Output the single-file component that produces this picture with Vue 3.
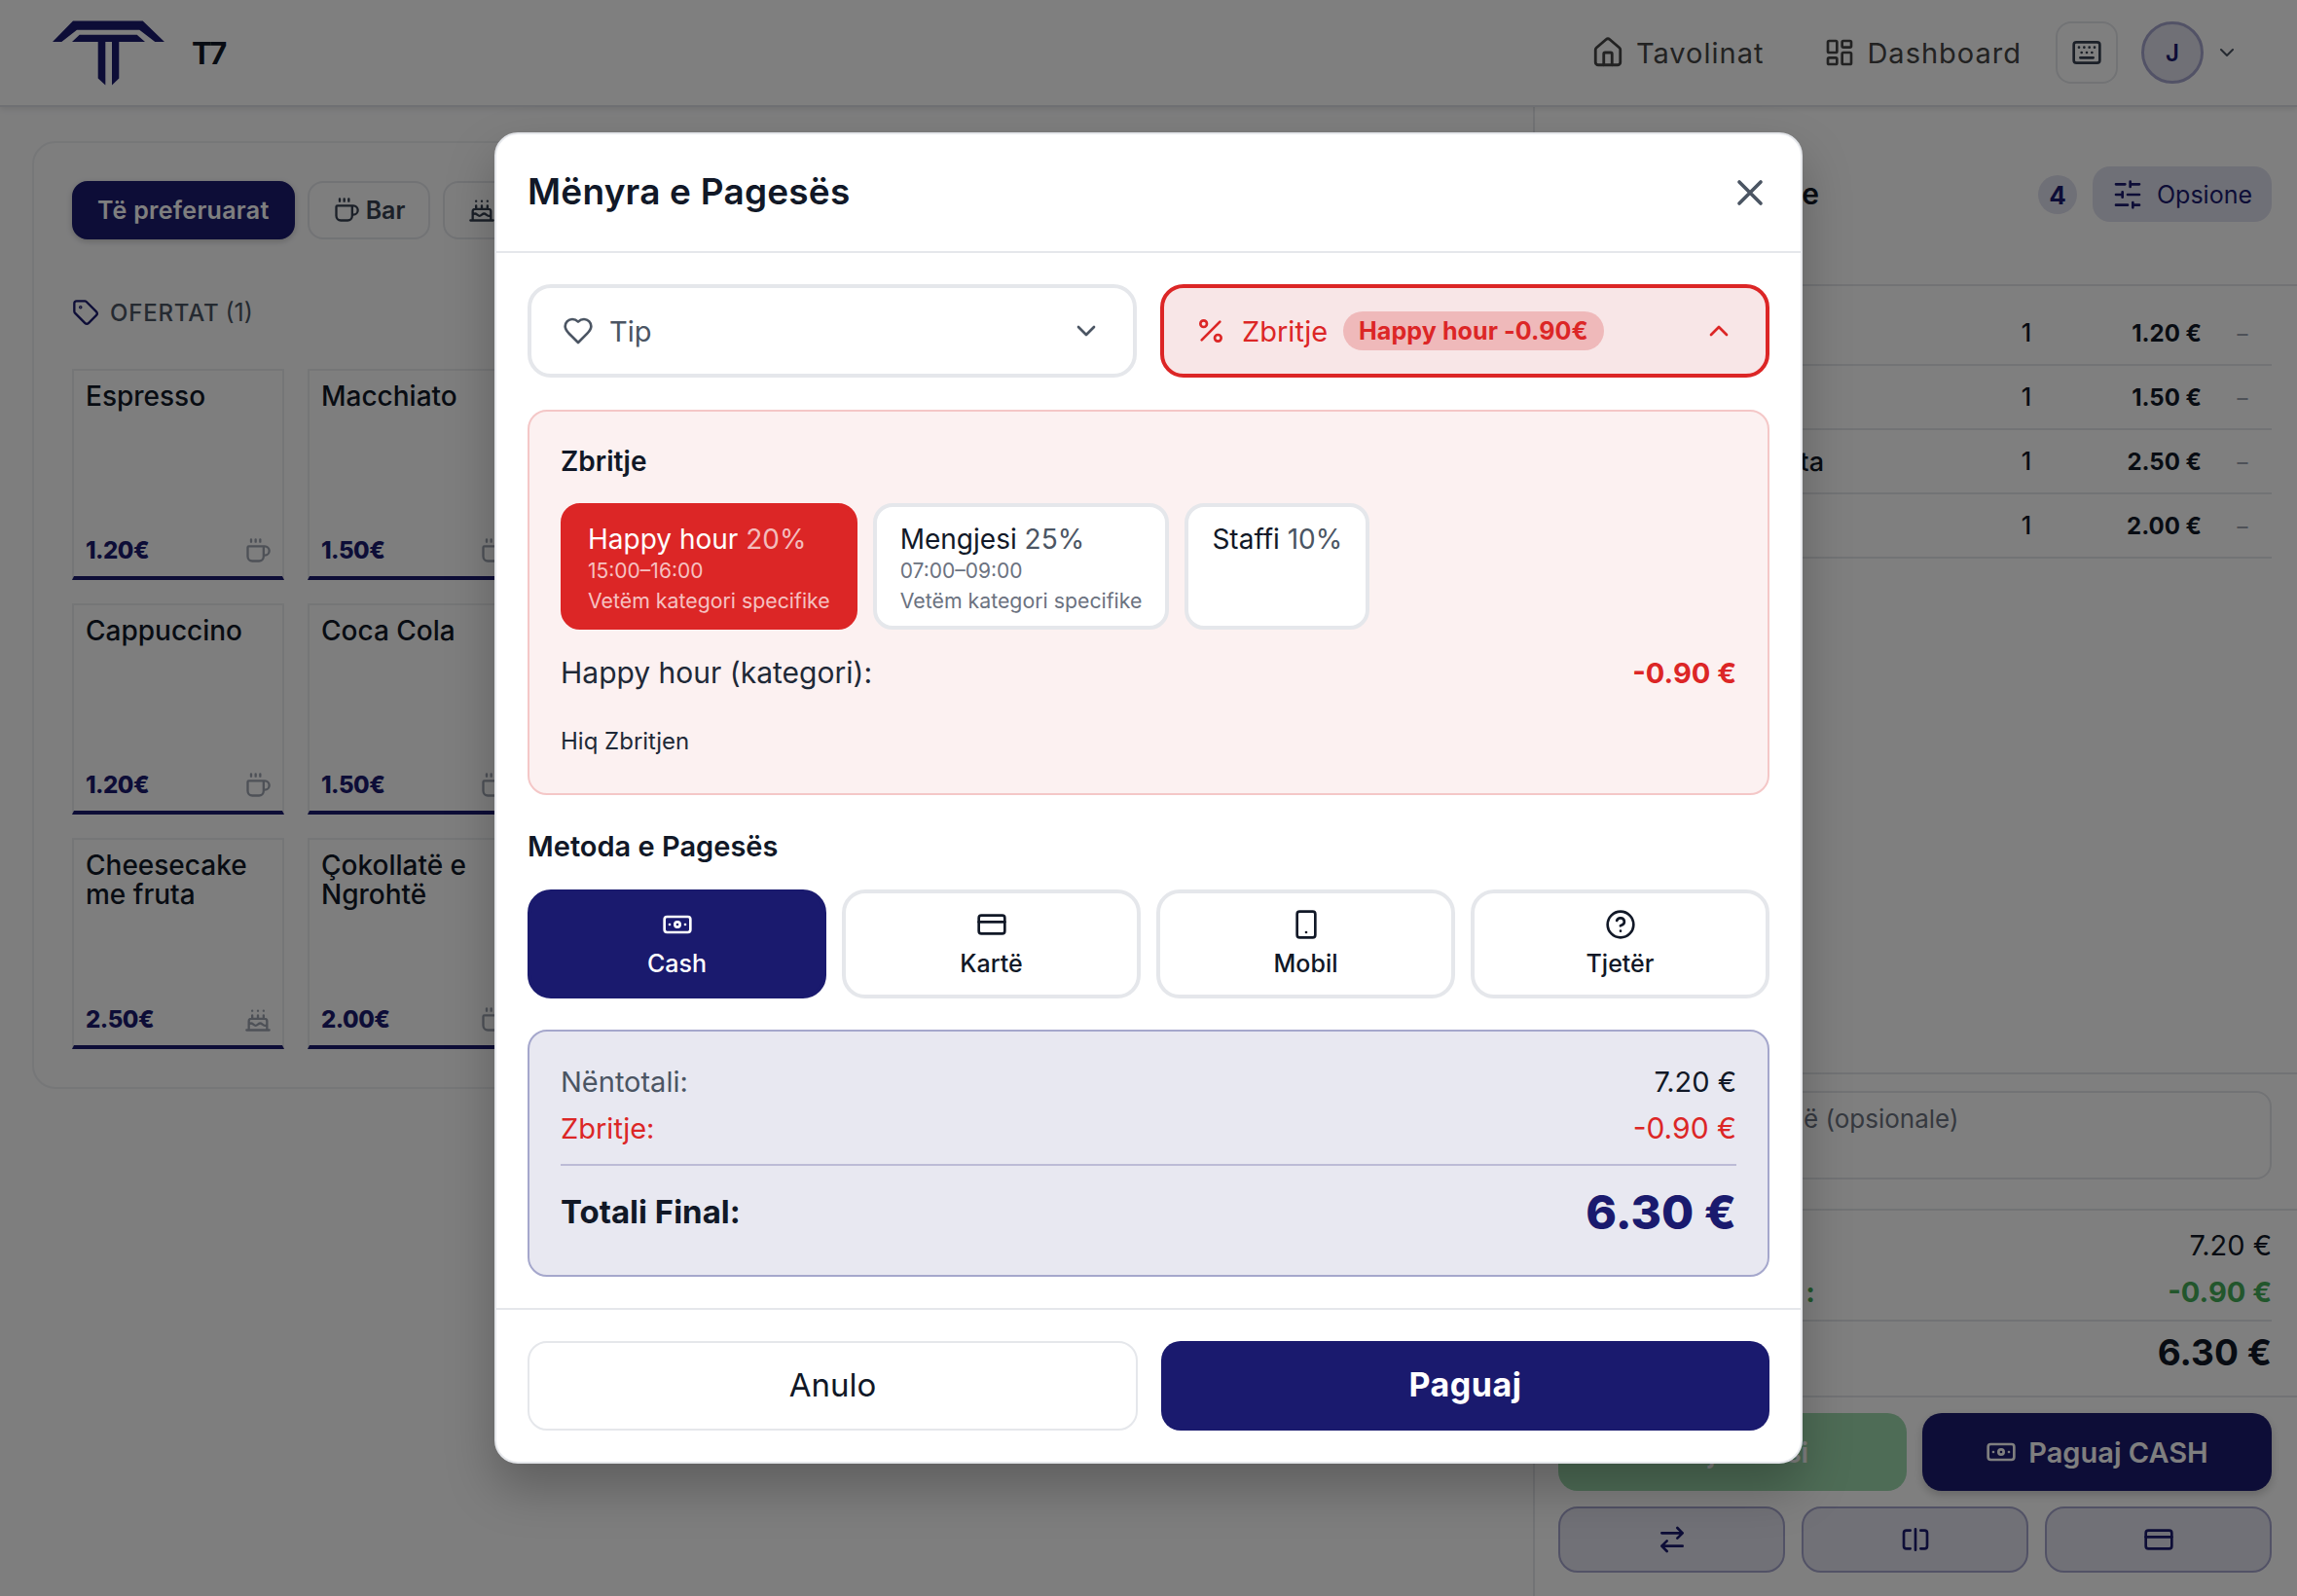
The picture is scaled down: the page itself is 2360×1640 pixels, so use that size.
<script setup>
const tabs = [
  { label: 'Bar', icon: 'i-coffee' },
  { label: '', icon: 'i-cake' },
]
const products = [
  { name: 'Espresso', price: '1.20€', icon: 'i-coffee' },
  { name: 'Macchiato', price: '1.50€', icon: 'i-coffee' },
  { name: 'Cappuccino', price: '1.20€', icon: 'i-coffee' },
  { name: 'Coca Cola', price: '1.50€', icon: 'i-coffee' },
  { name: 'Cheesecake me fruta', price: '2.50€', icon: 'i-cake' },
  { name: 'Çokollatë e Ngrohtë', price: '2.00€', icon: 'i-coffee' },
]
const orderRows = [
  { name: '', price: '1.20 €' },
  { name: '', price: '1.50 €' },
  { name: 'ta', price: '2.50 €' },
  { name: '', price: '2.00 €' },
]
const discounts = [
  { name: 'Happy hour', pct: '20%', time: '15:00–16:00', note: 'Vetëm kategori specifike', on: true },
  { name: 'Mengjesi', pct: '25%', time: '07:00–09:00', note: 'Vetëm kategori specifike', on: false },
  { name: 'Staffi', pct: '10%', time: '', note: '', on: false },
]
const methods = [
  { label: 'Cash', icon: 'i-cash', on: true },
  { label: 'Kartë', icon: 'i-card', on: false },
  { label: 'Mobil', icon: 'i-phone', on: false },
  { label: 'Tjetër', icon: 'i-help', on: false },
]
</script>

<template>
  <div class="page">
    <svg class="sprite" aria-hidden="true">
      <defs>
        <symbol id="i-home" viewBox="0 0 24 24"><path d="M15 21v-8a1 1 0 0 0-1-1h-4a1 1 0 0 0-1 1v8" /><path d="M3 10a2 2 0 0 1 .709-1.528l7-5.999a2 2 0 0 1 2.582 0l7 5.999A2 2 0 0 1 21 10v9a2 2 0 0 1-2 2H5a2 2 0 0 1-2-2z" /></symbol>
        <symbol id="i-dash" viewBox="0 0 24 24"><rect x="3" y="3" width="7" height="9" rx="1" /><rect x="14" y="3" width="7" height="5" rx="1" /><rect x="14" y="12" width="7" height="9" rx="1" /><rect x="3" y="16" width="7" height="5" rx="1" /></symbol>
        <symbol id="i-keyboard" viewBox="0 0 24 24"><path d="M10 8h.01M12 12h.01M14 8h.01M16 12h.01M18 8h.01M6 8h.01M7 16h10M8 12h.01" /><rect x="2" y="4" width="20" height="16" rx="2" /></symbol>
        <symbol id="i-down" viewBox="0 0 24 24"><path d="m6 9 6 6 6-6" /></symbol>
        <symbol id="i-up" viewBox="0 0 24 24"><path d="m18 15-6-6-6 6" /></symbol>
        <symbol id="i-tag" viewBox="0 0 24 24"><path d="M12.586 2.586A2 2 0 0 0 11.172 2H4a2 2 0 0 0-2 2v7.172a2 2 0 0 0 .586 1.414l8.704 8.704a2.426 2.426 0 0 0 3.42 0l6.58-6.58a2.426 2.426 0 0 0 0-3.42z" /><circle cx="7.5" cy="7.5" r=".5" /></symbol>
        <symbol id="i-coffee" viewBox="0 0 24 24"><path d="M10 2v2M14 2v2M6 2v2M16 8a1 1 0 0 1 1 1v8a4 4 0 0 1-4 4H7a4 4 0 0 1-4-4V9a1 1 0 0 1 1-1h14a4 4 0 1 1 0 8h-1" /></symbol>
        <symbol id="i-cake" viewBox="0 0 24 24"><path d="M20 21v-8a2 2 0 0 0-2-2H6a2 2 0 0 0-2 2v8M4 16s.5-1 2-1 2.5 2 4 2 2.5-2 4-2 2.5 2 4 2 2-1 2-1M2 21h20M7 8v3M12 8v3M17 8v3M7 4h.01M12 4h.01M17 4h.01" /></symbol>
        <symbol id="i-heart" viewBox="0 0 24 24"><path d="M19 14c1.49-1.46 3-3.21 3-5.5A5.5 5.5 0 0 0 16.5 3c-1.76 0-3 .5-4.5 2-1.5-1.5-2.74-2-4.5-2A5.5 5.5 0 0 0 2 8.5c0 2.3 1.5 4.05 3 5.5l7 7Z" /></symbol>
        <symbol id="i-percent" viewBox="0 0 24 24"><path d="M19 5 5 19" /><circle cx="6.5" cy="6.5" r="2.5" /><circle cx="17.5" cy="17.5" r="2.5" /></symbol>
        <symbol id="i-x" viewBox="0 0 24 24"><path d="M18 6 6 18M6 6l12 12" /></symbol>
        <symbol id="i-sliders" viewBox="0 0 24 24"><path d="M21 4h-7M10 4H3M21 12h-9M8 12H3M21 20h-5M12 20H3M14 2v4M8 10v4M16 18v4" /></symbol>
        <symbol id="i-cash" viewBox="0 0 24 24"><rect x="2" y="6" width="20" height="12" rx="2" /><circle cx="12" cy="12" r="2" /><path d="M6 12h.01M18 12h.01" /></symbol>
        <symbol id="i-card" viewBox="0 0 24 24"><rect x="2" y="5" width="20" height="14" rx="2" /><path d="M2 10h20" /></symbol>
        <symbol id="i-phone" viewBox="0 0 24 24"><rect x="5" y="2" width="14" height="20" rx="2" /><path d="M12 18h.01" /></symbol>
        <symbol id="i-help" viewBox="0 0 24 24"><circle cx="12" cy="12" r="10" /><path d="M9.09 9a3 3 0 0 1 5.83 1c0 2-3 3-3 3M12 17h.01" /></symbol>
        <symbol id="i-swap" viewBox="0 0 24 24"><path d="m16 3 4 4-4 4M20 7H4M8 21l-4-4 4-4M4 17h16" /></symbol>
        <symbol id="i-split" viewBox="0 0 24 24"><path d="M8 19H5c-1.1 0-2-.9-2-2V7c0-1.1.9-2 2-2h3M16 5h3c1.1 0 2 .9 2 2v10c0 1.1-.9 2-2 2h-3M12 4v16" /></symbol>
      </defs>
    </svg>

    <header class="topbar">
      <div class="brand">
        <svg class="logo" viewBox="0 0 116 68" aria-label="T7 logo">
          <polygon points="0,22 21,0.4 92.7,0.4 115,22 105.3,22 89.3,9.8 25,9.8 9.3,22" />
          <polygon points="20,22 27.7,14.7 86.7,14.7 95,22" />
          <polygon points="46.7,22 54.3,22 54.3,66.6 46.7,59.6" />
          <polygon points="61,22 68.3,22 68.3,59.6 61,66.6" />
        </svg>
        <span class="brand-name">T7</span>
      </div>
      <nav class="nav">
        <a class="nav-link"><svg class="ic34"><use href="#i-home" /></svg>Tavolinat</a>
        <a class="nav-link"><svg class="ic32"><use href="#i-dash" /></svg>Dashboard</a>
        <button class="kbd-btn"><svg class="ic32"><use href="#i-keyboard" /></svg></button>
        <div class="avatar">J</div>
        <svg class="ic24 avatar-chev"><use href="#i-down" /></svg>
      </nav>
    </header>

    <main class="main">
      <section class="left">
        <div class="catalog">
          <div class="tabs">
            <button class="tab tab-on">Të preferuarat</button>
            <button v-for="t in tabs" :key="t.icon" class="tab">
              <svg class="ic28"><use :href="'#' + t.icon" /></svg>{{ t.label }}
            </button>
          </div>
          <h3 class="offers"><svg class="ic28 navy"><use href="#i-tag" /></svg>OFERTAT <span class="offers-n">(1)</span></h3>
          <div class="grid">
            <div v-for="p in products" :key="p.name" class="product">
              <div class="product-name">{{ p.name }}</div>
              <div class="product-foot">
                <span class="product-price">{{ p.price }}</span>
                <svg class="ic28 product-ic"><use :href="'#' + p.icon" /></svg>
              </div>
            </div>
          </div>
        </div>
      </section>

      <aside class="order">
        <div class="order-head">
          <h2 class="order-title">e</h2>
          <span class="count">4</span>
          <button class="options"><svg class="ic32"><use href="#i-sliders" /></svg>Opsione</button>
        </div>
        <div class="order-rows">
          <div v-for="r in orderRows" :key="r.price" class="order-row">
            <span class="row-name">{{ r.name }}</span>
            <span class="row-qty">1</span>
            <span class="row-price">{{ r.price }}</span>
            <span class="row-rm">−</span>
          </div>
        </div>
        <div class="notes">
          <textarea class="notes-input" placeholder="ë (opsionale)"></textarea>
        </div>
        <div class="order-sum">
          <div class="sum-row"><span></span><span>7.20 €</span></div>
          <div class="sum-row sum-green"><span class="sum-colon">:</span><span>-0.90 €</span></div>
          <div class="sum-row sum-total"><span></span><span>6.30 €</span></div>
        </div>
        <div class="order-actions">
          <button class="act act-green">Ruaj Porosi</button>
          <button class="act act-navy"><svg class="ic32"><use href="#i-cash" /></svg>Paguaj CASH</button>
        </div>
        <div class="order-tools">
          <button class="tool"><svg class="ic32"><use href="#i-swap" /></svg></button>
          <button class="tool"><svg class="ic32"><use href="#i-split" /></svg></button>
          <button class="tool"><svg class="ic32"><use href="#i-card" /></svg></button>
        </div>
      </aside>
    </main>

    <div class="overlay">
      <div class="modal">
        <div class="modal-head">
          <h2 class="modal-title">Mënyra e Pagesës</h2>
          <button class="close"><svg class="ic44"><use href="#i-x" /></svg></button>
        </div>

        <div class="modal-body">
          <div class="toggles">
            <button class="toggle">
              <svg class="ic32"><use href="#i-heart" /></svg>
              <span class="toggle-label">Tip</span>
              <svg class="ic32 toggle-chev"><use href="#i-down" /></svg>
            </button>
            <button class="toggle toggle-on">
              <svg class="ic32"><use href="#i-percent" /></svg>
              <span class="toggle-label">Zbritje</span>
              <span class="toggle-chip">Happy hour -0.90€</span>
              <svg class="ic32 toggle-chev"><use href="#i-up" /></svg>
            </button>
          </div>

          <div class="discount">
            <h3 class="discount-title">Zbritje</h3>
            <div class="discount-cards">
              <button v-for="d in discounts" :key="d.name" class="dcard" :class="{ 'dcard-on': d.on }">
                <div class="dcard-name">{{ d.name }} <span class="dcard-pct">{{ d.pct }}</span></div>
                <div v-if="d.time" class="dcard-time">{{ d.time }}</div>
                <div v-if="d.note" class="dcard-note">{{ d.note }}</div>
              </button>
            </div>
            <div class="discount-line">
              <span>Happy hour (kategori):</span>
              <strong class="discount-val">-0.90 €</strong>
            </div>
            <a class="discount-clear">Hiq Zbritjen</a>
          </div>

          <h3 class="method-title">Metoda e Pagesës</h3>
          <div class="methods">
            <button v-for="m in methods" :key="m.label" class="method" :class="{ 'method-on': m.on }">
              <svg class="ic32"><use :href="'#' + m.icon" /></svg>
              <span>{{ m.label }}</span>
            </button>
          </div>

          <div class="totals">
            <div class="t-row t-grey"><span>Nëntotali:</span><span class="t-dark">7.20 €</span></div>
            <div class="t-row t-red"><span>Zbritje:</span><span class="t-red-val">-0.90 €</span></div>
            <div class="t-final">
              <span class="t-final-label">Totali Final:</span>
              <span class="t-final-val">6.30 €</span>
            </div>
          </div>
        </div>

        <div class="modal-foot">
          <button class="btn-cancel">Anulo</button>
          <button class="btn-pay">Paguaj</button>
        </div>
      </div>
    </div>
  </div>
</template>

<style>
html, body { margin: 0; background: #fff; }
</style>

<style scoped>
* { box-sizing: border-box; }
.page {
  position: relative;
  width: 2360px;
  height: 1640px;
  overflow: hidden;
  background: #fcfcfd;
  color: #111827;
  font-family: Inter, "Noto Sans", sans-serif;
}
button { font-family: inherit; cursor: pointer; }
h2, h3 { margin: 0; }
.sprite { position: absolute; width: 0; height: 0; }
svg { fill: none; stroke: currentColor; stroke-width: 2; stroke-linecap: round; stroke-linejoin: round; flex: none; display: block; }
.ic24 { width: 24px; height: 24px; }
.ic28 { width: 28px; height: 28px; }
.ic32 { width: 32px; height: 32px; }
.ic34 { width: 34px; height: 34px; }
.ic44 { width: 44px; height: 44px; }
.navy { color: #1a1a6e; }

/* top bar */
.topbar {
  height: 110px;
  display: flex;
  align-items: center;
  justify-content: space-between;
  padding: 0 60px 0 54px;
  background: #fff;
  border-bottom: 2px solid #dfe0e6;
  box-shadow: 0 2px 6px rgba(0, 0, 0, .1);
  position: relative;
}
.brand { display: flex; align-items: center; gap: 27px; }
.logo { width: 116px; height: 68px; fill: #1a1a6e; stroke: none; margin-top: 1px; }
.brand-name { font-size: 31px; font-weight: 700; }
.nav { display: flex; align-items: center; }
.nav-link { display: flex; align-items: center; gap: 12px; font-size: 29px; letter-spacing: 1px; margin-right: 62px; color: #444; }
.nav-link:nth-child(2) { margin-right: 35px; }
.kbd-btn { width: 64px; height: 64px; border-radius: 16px; border: 2px solid #e5e7eb; background: #fff; color: #374151; display: flex; align-items: center; justify-content: center; padding: 0; margin-right: 24px; }
.avatar { width: 64px; height: 64px; border-radius: 50%; background: #e1e1ed; border: 3px solid #a5a5cc; color: #1a1a6e; font-size: 24px; font-weight: 600; display: flex; align-items: center; justify-content: center; }
.avatar-chev { margin-left: 12px; color: #4b5563; }

/* layout */
.main { display: flex; height: 1530px; }
.left { flex: 1; padding: 35px 33px 0; }

.catalog {
  height: 974px;
  border: 2px solid #eceef1;
  border-radius: 24px;
  padding: 39px;
}
.tabs { display: flex; gap: 13px; }
.tab {
  height: 60px;
  display: flex;
  align-items: center;
  gap: 6px;
  padding: 0 24px;
  border-radius: 16px;
  border: 2px solid #e5e7eb;
  background: transparent;
  color: #374151;
  font-size: 25px;
  font-weight: 600;
  white-space: nowrap;
}
.tab-on { background: #1a1a6e; color: #fff; border-color: #1a1a6e; box-shadow: 0 2px 6px rgba(0,0,0,.2); letter-spacing: .3px; }
.offers { display: flex; align-items: center; gap: 11px; margin-top: 57px; height: 36px; font-size: 24px; font-weight: 500; letter-spacing: .8px; color: #4b5563; }
.offers-n { font-weight: 400; font-size: 25px; margin-left: -5px; letter-spacing: 0; }
.grid { display: grid; grid-template-columns: 218px 218px; gap: 24px; margin-top: 40px; }
.product {
  height: 217px;
  display: flex;
  flex-direction: column;
  justify-content: space-between;
  padding: 11px 12px 12px;
  border: 2px solid #eaecef;
  border-bottom: 4px solid #1a1a6e;
}
.product-name { font-size: 28px; font-weight: 500; line-height: 30px; color: #111827; }
.product-foot { display: flex; align-items: center; justify-content: space-between; }
.product-price { font-size: 24px; font-weight: 800; letter-spacing: -.5px; color: #1a1a6e; }
.product-ic { color: #9ca3af; margin-right: -1px; }

/* order panel */
.order { width: 785px; background: #fff; border-left: 2px solid #e5e7eb; display: flex; flex-direction: column; }
.order-head { height: 184px; border-bottom: 2px solid #e5e7eb; display: flex; align-items: flex-start; padding: 61px 26px 0 24px; }
.order-title { width: 268px; font-size: 30px; font-weight: 600; margin-top: 10px; margin-right: auto; text-align: right; }
.count { width: 40px; height: 40px; margin-top: 9px; margin-right: 16px; border-radius: 50%; background: #dfe0ee; color: #1a1a6e; font-size: 26px; font-weight: 700; display: flex; align-items: center; justify-content: center; }
.options { height: 57px; width: 184px; display: flex; align-items: center; justify-content: center; gap: 14px; border: 0; border-radius: 18px; background: #dfe0ee; color: #1a1a6e; font-size: 25px; padding: 0; }
.order-rows { padding: 16px 26px 0 24px; }
.order-row { height: 66px; display: grid; grid-template-columns: 273px 1fr 60px 150px 72px; align-items: center; border-bottom: 2px solid #e5e7eb; }
.row-name { font-size: 27px; font-weight: 500; white-space: nowrap; text-align: right; }
.row-qty { font-size: 25px; text-align: center; font-weight: 500; grid-column: 3; }
.row-price { font-size: 24px; font-weight: 700; text-align: right; }
.row-rm { color: #9ca3af; text-align: right; padding-right: 22px; font-size: 24px; }

.notes { margin-top: auto; border-top: 2px solid #e5e7eb; border-bottom: 2px solid #e5e7eb; padding: 17px 26px 30px 24px; }
.notes-input { display: block; width: 100%; height: 91px; border: 2px solid #e5e7eb; border-radius: 16px; background: #fff; padding: 11px 20px 0 250px; font: 400 26px Inter, sans-serif; resize: none; }
.notes-input::placeholder { color: #6b7280; }

.order-sum { height: 192px; border-bottom: 2px solid #e5e7eb; padding: 11px 26px 0 24px; }
.sum-row { display: flex; justify-content: space-between; height: 48px; align-items: center; font-size: 29px; color: #111827; }
.sum-green { font-weight: 700; color: #45ad58; }
.sum-colon { width: 264px; text-align: right; }
.sum-total { border-top: 2px solid #e5e7eb; margin-top: 5px; height: 64px; font-size: 37px; font-weight: 700; }
.order-actions { display: flex; gap: 16px; padding: 16px 26px 0 24px; }
.act { height: 80px; border: 0; border-radius: 20px; color: #fff; font-size: 29px; font-weight: 600; display: flex; align-items: center; justify-content: center; gap: 12px; }
.act-green { width: 358px; background: #9cd8ac; }
.act-navy { flex: 1; background: #1a1a6e; box-shadow: 0 4px 10px rgba(0,0,0,.2); }
.order-tools { display: grid; grid-template-columns: repeat(3, 1fr); gap: 17px; padding: 16px 26px 0 24px; margin-bottom: 24px; }
.tool { height: 68px; border-radius: 20px; border: 2px solid #a5a5cc; background: #e2e2ee; color: #1a1a6e; display: flex; align-items: center; justify-content: center; padding: 0; }

/* modal */
.overlay { position: absolute; inset: 0; background: rgba(0, 0, 0, .5); display: flex; align-items: center; justify-content: center; }
.modal { width: 1344px; height: 1368px; background: #fff; border: 2px solid #e5e7eb; border-radius: 24px; box-shadow: 0 25px 50px rgba(0,0,0,.25); display: flex; flex-direction: column; overflow: hidden; }
.modal-head { height: 122px; flex: none; display: flex; align-items: center; justify-content: space-between; padding: 0 32px 1px; border-bottom: 2px solid #e5e7eb; }
.modal-title { font-size: 37px; font-weight: 600; color: #111827; letter-spacing: .2px; margin-top: -2px; }
.close { border: 0; background: none; padding: 0; color: #4b5563; margin-right: -2px; }
.modal-body { flex: 1; padding: 32px 32px 0; }
.toggles { display: grid; grid-template-columns: 1fr 1fr; gap: 24px; }
.toggle { height: 96px; border: 4px solid #e5e7eb; border-radius: 24px; background: #fff; color: #4b5563; display: flex; align-items: center; gap: 16px; padding: 0 32px; font-size: 29px; text-align: left; }
.toggle-chev { margin-left: auto; }
.toggle-on { border-color: #dc2626; background: #f8e6e7; color: #dc2626; }
.toggle-chip { height: 40px; display: flex; align-items: center; padding: 0 16px; border-radius: 20px; background: #efb9ba; font-size: 25px; font-weight: 700; letter-spacing: .1px; white-space: nowrap; }

.discount { height: 396px; margin-top: 33px; padding: 33px 32px 32px; border: 2px solid #f4c7c7; border-radius: 20px; background: #fcf1f1; }
.discount-title { font-size: 28px; font-weight: 600; line-height: 36px; color: #111827; }
.discount-cards { display: flex; gap: 16px; margin-top: 25px; }
.dcard { height: 130px; padding: 14px 24px 0; border: 4px solid #e5e7eb; border-radius: 20px; background: #fff; color: #111827; text-align: left; display: flex; flex-direction: column; justify-content: flex-start; }
.dcard-name { font-size: 28px; line-height: 38px; font-weight: 400; white-space: nowrap; }
.dcard-pct { color: #4b5563; }
.dcard-time { font-size: 21px; line-height: 27px; color: #6b7280; white-space: nowrap; }
.dcard-note { font-size: 21.3px; line-height: 34px; color: #6b7280; white-space: nowrap; }
.dcard-on { background: #dc2626; border-color: #dc2626; color: #fff; }
.dcard-on .dcard-pct { color: #f3bcbc; }
.dcard-on .dcard-time, .dcard-on .dcard-note { color: #f6c1c1; }
.discount-line { display: flex; justify-content: space-between; align-items: center; margin-top: 26px; height: 36px; font-size: 30px; color: #1f2937; }
.discount-val { font-weight: 700; font-size: 29px; color: #dc2626; }
.discount-clear { display: block; margin-top: 35px; font-size: 24px; line-height: 36px; color: #1f2937; }

.method-title { margin-top: 35px; font-size: 29px; font-weight: 600; line-height: 36px; color: #111827; }
.methods { display: grid; grid-template-columns: repeat(4, 1fr); gap: 16px; margin-top: 26px; }
.method { height: 112px; border: 4px solid #e5e7eb; border-radius: 24px; background: #fff; color: #111827; font-size: 25px; font-weight: 500; display: flex; flex-direction: column; align-items: center; justify-content: center; gap: 9px; padding: 0 0 2px; }
.method-on { background: #1a1a6e; border-color: #1a1a6e; color: #fff; }

.totals { height: 254px; margin-top: 32px; padding: 27px 32px 0; border: 2px solid #a5a7cc; border-radius: 20px; background: #e8e8f1; }
.t-row { height: 48px; display: flex; justify-content: space-between; align-items: center; font-size: 29px; }
.t-grey { color: #4b5563; }
.t-dark { color: #111827; }
.t-red { color: #dc2626; }
.t-red-val { font-size: 30px; }
.t-final { display: flex; justify-content: space-between; align-items: center; height: 94px; margin-top: 13px; border-top: 2px solid #bcbbd6; padding-top: 2px; }
.t-final-label { font-size: 33px; font-weight: 700; }
.t-final-val { font-size: 48px; font-weight: 800; color: #1a1a6e; }

.modal-foot { flex: none; display: grid; grid-template-columns: 627px 1fr; gap: 24px; padding: 32px; border-top: 2px solid #e5e7eb; height: 158px; }
.btn-cancel { height: 92px; border: 2px solid #e5e7eb; border-radius: 20px; background: #fff; font-size: 33px; color: #111827; padding: 0 0 2px; }
.btn-pay { height: 92px; border: 0; border-radius: 20px; background: #1a1a6e; color: #fff; font-size: 34px; font-weight: 700; letter-spacing: .5px; padding: 0 0 4px; }
</style>
